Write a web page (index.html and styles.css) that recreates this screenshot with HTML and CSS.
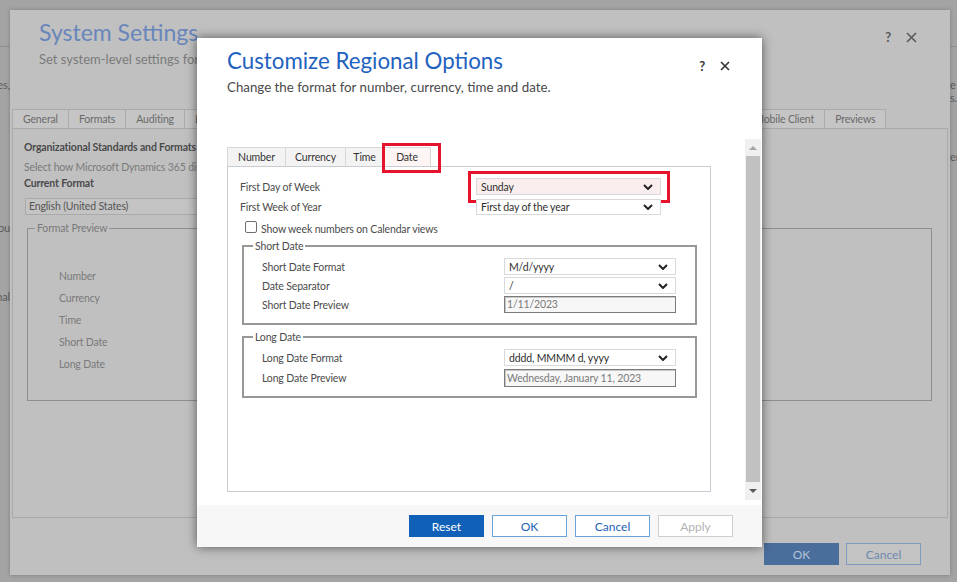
FILE: index.html
```html
<!DOCTYPE html>
<html lang="en">
<head>
<meta charset="utf-8">
<title>Customize Regional Options</title>
<link rel="stylesheet" href="styles.css">
</head>
<body>
<div class="desk">
  <div class="bg-head"></div>
  <div class="bg-body">
    <div class="bg-left">
      <span class="bl1">Customize entities,</span>
      <span class="bl2">Manage how you</span>
      <span class="bl3">Additional</span>
    </div>
    <div class="bg-right">
      <span class="br1">e</span>
      <span class="br2">s.</span>
      <span class="br3">er</span>
    </div>
  </div>
</div>

<section class="win">
  <header class="win-head">
    <div class="win-titles">
      <h1 class="win-title">System Settings</h1>
      <p class="win-sub">Set system-level settings for your organization.</p>
    </div>
    <div class="win-ctrls">
      <span class="help">?</span>
      <svg class="xicon" width="11" height="11" viewBox="0 0 11 11"><path d="M1 1L10 10M10 1L1 10" stroke="currentColor" stroke-width="1.6" fill="none"/></svg>
    </div>
  </header>
  <nav class="win-tabs">
    <span class="wtab">General</span>
    <span class="wtab">Formats</span>
    <span class="wtab">Auditing</span>
    <span class="wtab">Email</span>
    <span class="wtab">Marketing</span>
    <span class="wtab">Customization</span>
    <span class="wtab">Outlook</span>
    <span class="wtab">Reporting</span>
    <span class="wtab">Goals</span>
    <span class="wtab">Sales</span>
    <span class="wtab">Service</span>
    <span class="wtab wtab-wide">Synchronization</span>
    <span class="wtab">Mobile Client</span>
    <span class="wtab">Previews</span>
  </nav>
  <div class="win-panel">
    <h3 class="wp-h">Organizational Standards and Formats</h3>
    <p class="wp-desc">Select how Microsoft Dynamics 365 displays numbers, currencies, times, and dates.</p>
    <h4 class="wp-h2">Current Format</h4>
    <div class="wsel">English (United States)</div>
    <fieldset class="wfs">
      <legend>Format Preview</legend>
      <div class="prev-grid">
        <span>Number</span>
        <span>Currency</span>
        <span>Time</span>
        <span>Short Date</span>
        <span>Long Date</span>
      </div>
    </fieldset>
  </div>
  <footer class="win-foot">
    <button class="wbtn wprimary">OK</button>
    <button class="wbtn">Cancel</button>
  </footer>
</section>

<section class="dlg">
  <header class="dlg-head">
    <div>
      <h2 class="dlg-title">Customize Regional Options</h2>
      <p class="dlg-sub">Change the format for number, currency, time and date.</p>
    </div>
    <div class="dlg-ctrls">
      <span class="help">?</span>
      <svg class="xicon" width="10" height="10" viewBox="0 0 10 10"><path d="M1 1L9 9M9 1L1 9" stroke="currentColor" stroke-width="1.6" fill="none"/></svg>
    </div>
  </header>
  <div class="dlg-body">
    <div class="dcontent">
      <div class="dtabs">
        <span class="dtab t-num">Number</span>
        <span class="dtab t-cur">Currency</span>
        <span class="dtab t-time">Time</span>
        <span class="dtab t-date on">Date<i class="hl hl-tab"></i></span>
      </div>
      <div class="dpanel">
        <div class="frow r1">
          <label>First Day of Week</label>
          <div class="sel pink">Sunday<svg class="chev" width="10" height="6" viewBox="0 0 10 6"><path d="M1 1L5 5L9 1" stroke="#222" stroke-width="2" fill="none"/></svg><i class="hl hl-sel"></i></div>
        </div>
        <div class="frow r2">
          <label>First Week of Year</label>
          <div class="sel">First day of the year<svg class="chev" width="10" height="6" viewBox="0 0 10 6"><path d="M1 1L5 5L9 1" stroke="#222" stroke-width="2" fill="none"/></svg></div>
        </div>
        <div class="cbrow"><span class="cb"></span><span class="cbtext">Show week numbers on Calendar views</span></div>
        <fieldset class="dfs fs1">
          <legend>Short Date</legend>
          <div class="frow"><label>Short Date Format</label><div class="sel">M/d/yyyy<svg class="chev" width="10" height="6" viewBox="0 0 10 6"><path d="M1 1L5 5L9 1" stroke="#222" stroke-width="2" fill="none"/></svg></div></div>
          <div class="frow"><label>Date Separator</label><div class="sel">/<svg class="chev" width="10" height="6" viewBox="0 0 10 6"><path d="M1 1L5 5L9 1" stroke="#222" stroke-width="2" fill="none"/></svg></div></div>
          <div class="frow"><label>Short Date Preview</label><div class="inp">1/11/2023</div></div>
        </fieldset>
        <fieldset class="dfs fs2">
          <legend>Long Date</legend>
          <div class="frow"><label>Long Date Format</label><div class="sel">dddd, MMMM d, yyyy<svg class="chev" width="10" height="6" viewBox="0 0 10 6"><path d="M1 1L5 5L9 1" stroke="#222" stroke-width="2" fill="none"/></svg></div></div>
          <div class="frow"><label>Long Date Preview</label><div class="inp tall">Wednesday, January 11, 2023</div></div>
        </fieldset>
      </div>
    </div>
    <div class="vscroll">
      <div class="sb-btn"><i class="tri-up"></i></div>
      <div class="sb-thumb"></div>
      <div class="sb-btn sb-dn"><i class="tri-dn"></i></div>
    </div>
  </div>
  <footer class="dlg-foot">
    <button class="dbtn dprimary">Reset</button>
    <button class="dbtn">OK</button>
    <button class="dbtn">Cancel</button>
    <button class="dbtn ddis">Apply</button>
  </footer>
</section>
</body>
</html>
```

FILE: styles.css
```css
* { box-sizing: border-box; margin: 0; padding: 0; }
html, body { width: 957px; height: 582px; overflow: hidden; }
body {
  background: #a4a4a4;
  font-family: Lato, "Open Sans", "DejaVu Sans", sans-serif;
  font-size: 10.5px;
  letter-spacing: -0.15px;
  position: relative;
  color: #333;
}
button { font-family: inherit; letter-spacing: 0; cursor: default; }

/* background page fragments */
.desk { height: 100%; }
.bg-head { height: 47px; border-bottom: 1px solid #8f8f8f; }
.bg-body { display: flex; justify-content: space-between; color: #5c5c5c; font-size: 11px; line-height: 14px; }
.bg-left { width: 10px; display: flex; flex-direction: column; align-items: flex-end; white-space: nowrap; }
.bg-right { width: 7px; display: flex; flex-direction: column; white-space: nowrap; }
.bl1 { margin-top: 31px; }
.bl2 { margin-top: 129px; }
.bl3 { margin-top: 55px; }
.br1 { margin-top: 31px; }
.br2 { margin-top: -1px; }
.br3 { margin-top: 45px; }

/* main system settings window */
.win {
  position: absolute; left: 10px; top: 10px; width: 940px; height: 565px;
  background: #c0c0c0;
  box-shadow: 0 0 4px rgba(0,0,0,.25);
  display: flex; flex-direction: column;
}
.win-head { height: 99px; display: flex; justify-content: space-between; padding: 7px 33px 0 29px; }
.win-title { font-size: 23px; font-weight: 400; line-height: 30px; color: #6886bb; letter-spacing: 0; }
.win-sub { font-size: 13px; line-height: 16px; color: #7a7a7a; margin-top: 4px; letter-spacing: 0; }
.win-ctrls { display: flex; align-items: center; gap: 15px; height: 16px; margin-top: 12px; color: #5a5a5a; }
.win-ctrls .help { font-size: 13px; font-weight: 700; }

.win-tabs { display: flex; height: 19px; padding-left: 2px; }
.wtab {
  border: 1px solid #ababab; border-bottom: none; margin-right: -1px;
  background: #c5c5c5; color: #6a6a6a; padding: 0 10px; line-height: 18px; white-space: nowrap;
}
.wtab-wide { padding: 0 12px 0 13px; }
.win-panel { margin: 0 2px; height: 390px; border: 1px solid #a9a9a9; padding: 11px 11px 0; }
.wp-h { font-size: 10.5px; font-weight: 700; line-height: 15px; color: #4a4a4a; }
.wp-desc { font-size: 10.5px; line-height: 15px; color: #7a7a7a; margin-top: 5px; }
.wp-h2 { font-size: 10.5px; font-weight: 700; line-height: 15px; color: #4a4a4a; margin-top: 1px; }
.wsel { width: 420px; height: 17px; margin-top: 7px; margin-left: 1px; border: 1px solid #a9a9a9; background: #c4c4c4; color: #555; padding: 0 3px; line-height: 15px; }
.wfs { margin: 6px 4px 0 3px; height: 180px; border: 1px solid #8e8e8e; padding: 0; }
.wfs legend { margin-left: 7px; padding: 0 2px; color: #7a7a7a; line-height: 14px; }
.prev-grid { display: grid; grid-template-columns: 200px; row-gap: 7px; line-height: 15px; color: #7a7a7a; padding: 34px 0 0 31px; }
.win-foot { flex: 1; display: flex; justify-content: flex-end; align-items: flex-end; gap: 7px; padding: 0 29px 10px 0; }
.wbtn { width: 75px; height: 22px; font-size: 12px; border: 1px solid #7f9bbf; background: #c3c3c3; color: #6c88b0; }
.wbtn.wprimary { background: #4a6e9c; border-color: #4a6e9c; color: #b4c3d8; }

/* dialog */
.dlg {
  position: absolute; left: 197px; top: 38px; width: 565px; height: 509px;
  background: #fff;
  box-shadow: 0 0 10px rgba(0,0,0,.55);
  display: flex; flex-direction: column;
}
.dlg-head { height: 101px; display: flex; justify-content: space-between; padding: 8px 32px 0 30px; }
.dlg-title { font-size: 22.3px; font-weight: 400; line-height: 30px; color: #1f62c0; letter-spacing: 0; }
.dlg-sub { font-size: 13.3px; line-height: 16px; color: #4a4a4a; margin-top: 3px; letter-spacing: 0; }
.dlg-ctrls { display: flex; align-items: center; gap: 15px; height: 16px; margin-top: 12px; color: #333; }
.dlg-ctrls .help { font-size: 13px; font-weight: 700; }

.dlg-body { flex: 1; display: flex; padding: 0 1px 5px 30px; }
.dcontent { flex: 1; padding-top: 8px; }
.dtabs { display: flex; height: 19px; }
.dtab {
  position: relative; border: 1px solid #d8d8d8; border-bottom: none; margin-right: -1px;
  background: #f3f3f3; color: #333; line-height: 18px; white-space: nowrap; text-align: center;
}
.t-num { width: 59px; }
.t-cur { width: 61px; }
.t-time { width: 39px; }
.t-date { width: 48px; }
.dtab.on { background: #fdf4f4; }
.hl { position: absolute; border: 3px solid #e5132b; pointer-events: none; }
.hl-tab { left: -2px; right: -11px; top: -5px; bottom: -7px; }
.hl-sel { left: -9px; right: -10px; top: -8px; bottom: -9px; }

.dpanel { width: 484px; height: 326px; border: 1px solid #c9cdd3; padding: 11px 14px 0 12px; }
.frow { display: flex; align-items: center; height: 17px; }
.frow label { width: 236px; color: #4c4c4c; }
.frow.r2 { margin-top: 4px; height: 16px; }
.sel {
  position: relative; width: 185px; height: 100%;
  border: 1px solid #d9d9d9; background: #fff;
  display: flex; align-items: center; justify-content: space-between;
  padding: 0 7px 0 4px; color: #2e2e2e;
}
.sel.pink { background: #fbeeee; }
.chev { flex: none; }
.cbrow { display: flex; align-items: flex-start; gap: 4px; height: 12px; margin: 6px 0 0 5px; color: #4c4c4c; }
.cb { width: 12px; height: 12px; border: 1px solid #6e6e6e; border-radius: 2px; background: #fff; flex: none; }
.cbtext { line-height: 14px; margin-top: 1px; }

.dfs { margin: 6px 0 0 2px; width: 455px; border: 2px solid #989898; padding: 5px 18px 10px; }
.dfs legend { margin-left: -9px; padding: 0 2px; color: #4c4c4c; line-height: 14px; }
.dfs .frow { height: 17px; }
.dfs .frow + .frow { margin-top: 2px; }
.dfs .frow label { width: 242px; }
.dfs .sel { width: 172px; }
.inp {
  width: 172px; height: 17px; border: 1px solid #7b7b7b; box-shadow: inset 1px 1px 0 #c8c8c8;
  background: #f7f7f7; color: #7a7a7a; padding: 0 2px; line-height: 15px;
}
.inp.tall { height: 18px; line-height: 16px; }
.fs2 { margin-top: 5px; padding-bottom: 10px; }
.fs2 .frow + .frow { margin-top: 3px; }

.vscroll { width: 16px; background: #f0f0f0; display: flex; flex-direction: column; }
.sb-btn { height: 17px; display: flex; align-items: center; justify-content: center; }
.sb-dn { height: 18px; }
.sb-thumb { flex: 1; margin: 0 1px 0 1px; background: #c1c1c1; }
.tri-up { width: 0; height: 0; border-left: 4px solid transparent; border-right: 4px solid transparent; border-bottom: 4px solid #a6a6a6; }
.tri-dn { width: 0; height: 0; border-left: 4px solid transparent; border-right: 4px solid transparent; border-top: 4px solid #5a5a5a; }

.dlg-foot { height: 42px; background: #f7f7f7; display: flex; justify-content: flex-end; gap: 8px; padding: 10px 29px 0 0; }
.dbtn { width: 75px; height: 22px; font-size: 12px; border: 1px solid #6aa2da; background: #fff; color: #1c63b5; }
.dbtn.dprimary { background: #1160b8; border-color: #1160b8; color: #fff; }
.dbtn.ddis { border-color: #cfcfcf; color: #b3b3b3; }
```
